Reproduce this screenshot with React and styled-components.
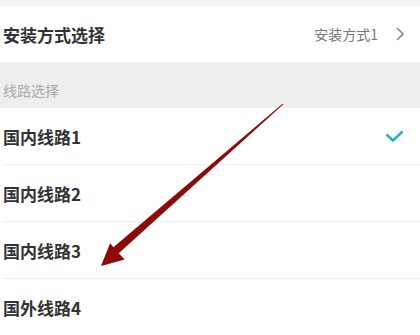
import React from "react";
import styled, { createGlobalStyle } from "styled-components";

const GlobalStyle = createGlobalStyle`
  body {
    margin: 0;
    background: #ffffff;
    font-family: "Noto Sans CJK SC", "Noto Sans", sans-serif;
  }
`;

const Page = styled.div`
  position: relative;
  width: 420px;
  height: 335px;
  overflow: hidden;
  background: #ffffff;
  border-top: 6px solid #f6f6f6;
  box-sizing: border-box;
`;

const SettingRow = styled.div`
  display: flex;
  align-items: center;
  justify-content: space-between;
  height: 56px;
  padding: 0 16px 0 3px;
`;

const Title = styled.div`
  font-size: 17px;
  font-weight: 700;
  color: #333333;
`;

const Value = styled.div`
  display: flex;
  align-items: center;
  gap: 18px;
  font-size: 14px;
  color: #777777;
`;

const SectionHeader = styled.div`
  height: 46px;
  background: #eeeeee;
  box-sizing: border-box;
  padding: 18px 0 0 3px;
  font-size: 14px;
  color: #aaaaaa;
`;

const List = styled.div`
  padding-left: 3px;
`;

const OptionRow = styled.div`
  display: flex;
  align-items: center;
  justify-content: space-between;
  height: 56px;
  padding-right: 16px;
  border-bottom: 1px solid #eeeeee;
`;

const OptionName = styled.div`
  font-size: 17px;
  font-weight: 700;
  color: #333333;
`;

const Overlay = styled.svg`
  position: absolute;
  left: 0;
  top: -6px;
  pointer-events: none;
`;

const Chevron = () => (
  <svg width="8" height="14" viewBox="0 0 8 14">
    <polyline points="1,1 7,7 1,13" fill="none" stroke="#888" strokeWidth="1.6" />
  </svg>
);

const Check = () => (
  <svg width="19" height="12" viewBox="0 0 19 12">
    <polyline points="1.5,4.5 8,10.5 17.5,1.5" fill="none" stroke="#2ab3bd" strokeWidth="2.6" />
  </svg>
);

const options = [
  { name: "国内线路1", selected: true },
  { name: "国内线路2" },
  { name: "国内线路3" },
  { name: "国外线路4" },
];

const App = () => {
  return (
    <Page>
      <GlobalStyle />
      <SettingRow>
        <Title>安装方式选择</Title>
        <Value>
          安装方式1
          <Chevron />
        </Value>
      </SettingRow>
      <SectionHeader>线路选择</SectionHeader>
      <List>
        {options.map(opt => (
          <OptionRow key={opt.name}>
            <OptionName>{opt.name}</OptionName>
            {opt.selected && <Check />}
          </OptionRow>
        ))}
      </List>
      <Overlay width="420" height="335" viewBox="0 0 420 335">
        <polygon
          points="283.4,104.3 118.8,253.2 124.7,259.6 101,266 110.1,243.2 113.4,247.3 282.6,103.7"
          fill="#8b0a0a"
        />
      </Overlay>
    </Page>
  );
};

export default App;
